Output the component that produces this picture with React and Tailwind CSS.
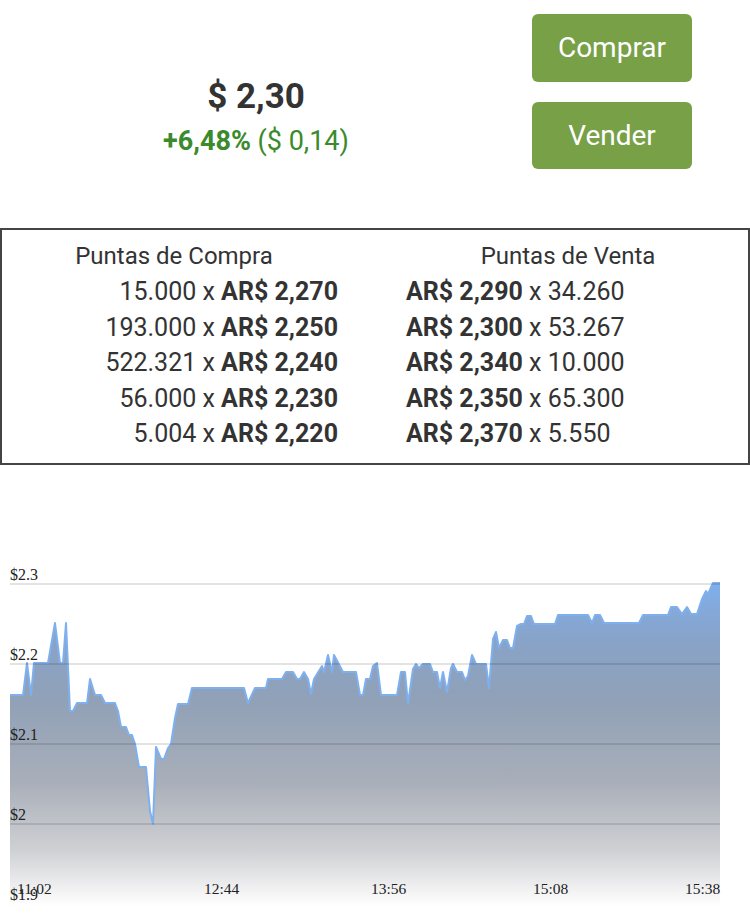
import React from "react";

const pts = [
  [10,694],[23,694],[27,662],[31,694],[34,662],[48,662],[55,622],[60,662],[63,662],[66,622],[70,710],[73,710],[77,702],[87,702],[90,678],[95,694],[101,694],[105,702],[115,702],[118,710],[121,726],[126,726],[129,734],[132,734],[135,743],[139,766],[146,766],[150,810],[153,823],[156,746],[161,758],[164,758],[168,747],[171,743],[175,717],[178,703],[188,703],[192,687],[244,687],[248,702],[255,687],[266,687],[268,678],[282,678],[286,671],[293,671],[297,678],[300,678],[304,671],[308,678],[311,693],[314,678],[322,665],[324,671],[328,654],[332,671],[334,654],[343,671],[356,671],[360,694],[363,694],[366,678],[370,678],[373,665],[377,662],[381,694],[397,694],[401,671],[405,671],[408,703],[413,668],[416,663],[419,667],[423,663],[430,663],[433,671],[437,671],[440,687],[443,671],[447,691],[451,667],[453,663],[457,671],[462,671],[465,679],[468,675],[472,654],[476,663],[486,663],[489,687],[493,638],[496,631],[499,647],[503,639],[507,639],[510,647],[513,647],[517,625],[521,623],[524,623],[527,615],[531,615],[534,623],[555,623],[558,614],[588,614],[592,622],[595,614],[600,614],[604,622],[639,622],[643,614],[668,614],[671,606],[677,606],[682,613],[687,606],[691,613],[697,613],[702,598],[706,590],[708,593],[713,582],[720,582]
];

const line = pts.map((p, i) => (i === 0 ? "M" : "L") + p[0] + "," + p[1]).join(" ");
const area = "M10,905 L" + pts.map((p) => p[0] + "," + p[1]).join(" L") + " L720,905 Z";

const buys = [
  ["15.000", "AR$ 2,270"],
  ["193.000", "AR$ 2,250"],
  ["522.321", "AR$ 2,240"],
  ["56.000", "AR$ 2,230"],
  ["5.004", "AR$ 2,220"],
];
const sells = [
  ["AR$ 2,290", "34.260"],
  ["AR$ 2,300", "53.267"],
  ["AR$ 2,340", "10.000"],
  ["AR$ 2,350", "65.300"],
  ["AR$ 2,370", "5.550"],
];

function Chart() {
  const grid = [
    [583, "$2.3", true],
    [663, "$2.2", true],
    [743, "$2.1", true],
    [823, "$2", true],
    [903, "$1.9", false],
  ];
  const times = [
    [17, "11:02"],
    [204, "12:44"],
    [371, "13:56"],
    [533, "15:08"],
    [685, "15:38"],
  ];
  return (
    <svg width="750" height="360" viewBox="0 557 750 360" className="block">
      <defs>
        <linearGradient id="fillg" gradientUnits="userSpaceOnUse" x1="0" y1="582" x2="0" y2="905">
          <stop offset="0" stopColor="#80aeea" />
          <stop offset="0.18" stopColor="#88a3c8" />
          <stop offset="0.37" stopColor="#91a1b7" />
          <stop offset="0.62" stopColor="#a9afb9" />
          <stop offset="0.83" stopColor="#d0d1d4" />
          <stop offset="1" stopColor="#ffffff" />
        </linearGradient>
      </defs>
      <path d={area} fill="url(#fillg)" />
      <path d={line} fill="none" stroke="#7fb0ee" strokeWidth="2" strokeLinejoin="round" />
      {grid.map(([y, t, show]) => (
        <g key={t}>
          {show && <line x1="10" x2="720" y1={y} y2={y} stroke="rgba(0,0,0,0.11)" strokeWidth="2" />}
          <text x="10" y={y - 4} fontFamily="'Liberation Serif', serif" fontSize="16" fill="#222">
            {t}
          </text>
        </g>
      ))}
      {times.map(([x, t]) => (
        <text key={t} x={x} y="893" fontFamily="'Liberation Serif', serif" fontSize="15.5" fill="#222">
          {t}
        </text>
      ))}
    </svg>
  );
}

export default function App() {
  return (
    <div className="w-[750px] h-[917px] bg-white overflow-hidden text-[#333]" style={{ fontFamily: "Roboto, 'Noto Sans', sans-serif" }}>
      <div className="flex pt-[14px]">
        <div className="w-[512px] flex flex-col items-center pt-[61px]">
          <div className="text-[35px] leading-[44px] font-bold text-[#333]">$ 2,30</div>
          <div className="mt-[5px] text-[27px] leading-[34px] text-[#3b8a2c]">
            <span className="font-bold">+6,48%</span> ($ 0,14)
          </div>
        </div>
        <div className="ml-[20px] w-[160px] flex flex-col gap-[20px]">
          <div className="h-[68px] rounded-[6px] bg-[#77a047] text-white text-[28px] flex items-center justify-center">Comprar</div>
          <div className="h-[67px] rounded-[6px] bg-[#77a047] text-white text-[28px] flex items-center justify-center">Vender</div>
        </div>
      </div>

      <div className="mt-[59px] h-[237px] border-2 border-[#444] flex pt-[9px] leading-[35.4px]">
        <div className="ml-[8px] w-[328px] flex flex-col">
          <div className="text-center text-[24px]">Puntas de Compra</div>
          {buys.map(([q, p]) => (
            <div key={q} className="text-right text-[25px]">
              {q} x <span className="font-bold">{p}</span>
            </div>
          ))}
        </div>
        <div className="ml-[68px] w-[324px] flex flex-col">
          <div className="text-center text-[24px]">Puntas de Venta</div>
          {sells.map(([p, q]) => (
            <div key={p} className="text-left text-[25px]">
              <span className="font-bold">{p}</span> x {q}
            </div>
          ))}
        </div>
      </div>

      <div className="mt-[93px]">
        <Chart />
      </div>
    </div>
  );
}
